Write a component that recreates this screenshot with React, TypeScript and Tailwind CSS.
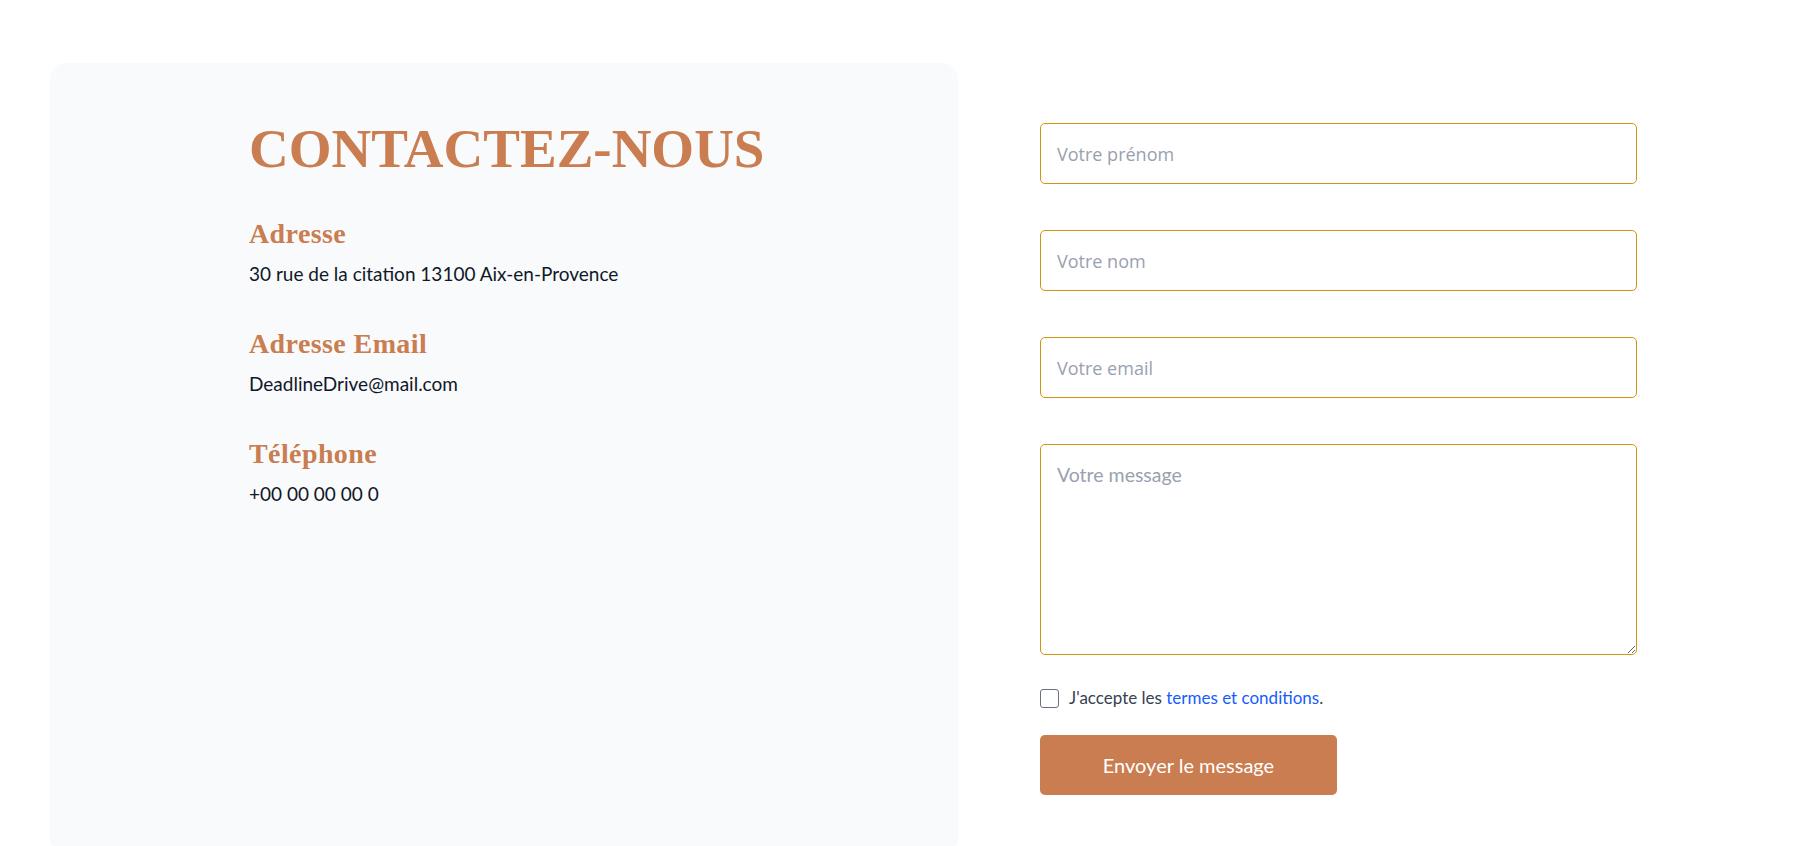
import { useState } from 'react';

const serif = "font-['Liberation_Serif',serif]";
const body = "font-['Lato',sans-serif]";

const infos = [
    { title: 'Adresse', text: '30 rue de la citation 13100 Aix-en-Provence' },
    { title: 'Adresse Email', text: 'DeadlineDrive@mail.com' },
    { title: 'Téléphone', text: '+00 00 00 00 0' },
];

function ContactInfo() {
    return (
        <section className="w-[908px] h-[791px] shrink-0 rounded-2xl bg-gray-50 pl-[199px] pt-[58px]">
            <h1
                className={`${serif} text-[55px] leading-none font-bold text-[#c97d50]`}
            >
                CONTACTEZ-NOUS
            </h1>
            <div className="mt-[44px] flex flex-col gap-[42px]">
                {infos.map((info) => (
                    <div key={info.title}>
                        <h3
                            className={`${serif} text-[28px] leading-none font-bold tracking-[0.4px] text-[#c97d50]`}
                        >
                            {info.title}
                        </h3>
                        <p
                            className={`${body} mt-3 text-[19px] leading-7 text-gray-900`}
                        >
                            {info.text}
                        </p>
                    </div>
                ))}
            </div>
        </section>
    );
}

function ContactForm() {
    const [accepted, setAccepted] = useState<boolean>(false);
    const field =
        'w-full rounded-[5px] border border-[#d4930f] bg-white px-4 text-gray-900 placeholder:text-gray-400 outline-none';

    return (
        <form
            className="ml-[82px] mt-[60px] flex w-[597px] flex-col"
            onSubmit={(e) => e.preventDefault()}
        >
            <div className="flex flex-col gap-[46px]">
                <input
                    className={`${field} h-[61px] text-[18px] font-['Open_Sans',sans-serif]`}
                    placeholder="Votre prénom"
                />
                <input
                    className={`${field} h-[61px] text-[18px] font-['Open_Sans',sans-serif]`}
                    placeholder="Votre nom"
                />
                <input
                    className={`${field} h-[61px] text-[18px] font-['Open_Sans',sans-serif]`}
                    placeholder="Votre email"
                />
                <textarea
                    className={`${field} ${body} h-[211px] py-4 text-[19.5px] leading-7`}
                    placeholder="Votre message"
                />
            </div>
            <label
                className={`${body} mt-[31px] flex items-center gap-[10px] text-[17px] leading-6 text-gray-700`}
            >
                <input
                    type="checkbox"
                    checked={accepted}
                    onChange={() => setAccepted(!accepted)}
                    className="h-[19px] w-[19px] appearance-none rounded-[3px] border border-gray-500 bg-white checked:bg-[#c97d50]"
                />
                <span>
                    J'accepte les{' '}
                    <a href="#" className="text-blue-600">
                        termes et conditions
                    </a>
                    .
                </span>
            </label>
            <button
                type="submit"
                className={`${body} mt-[25px] h-[60px] w-[297px] rounded-[5px] bg-[#c97d50] text-[20px] text-white`}
            >
                Envoyer le message
            </button>
        </form>
    );
}

export default function App() {
    return (
        <main className="flex min-h-screen bg-white pl-[50px] pt-[63px]">
            <ContactInfo />
            <ContactForm />
        </main>
    );
}
